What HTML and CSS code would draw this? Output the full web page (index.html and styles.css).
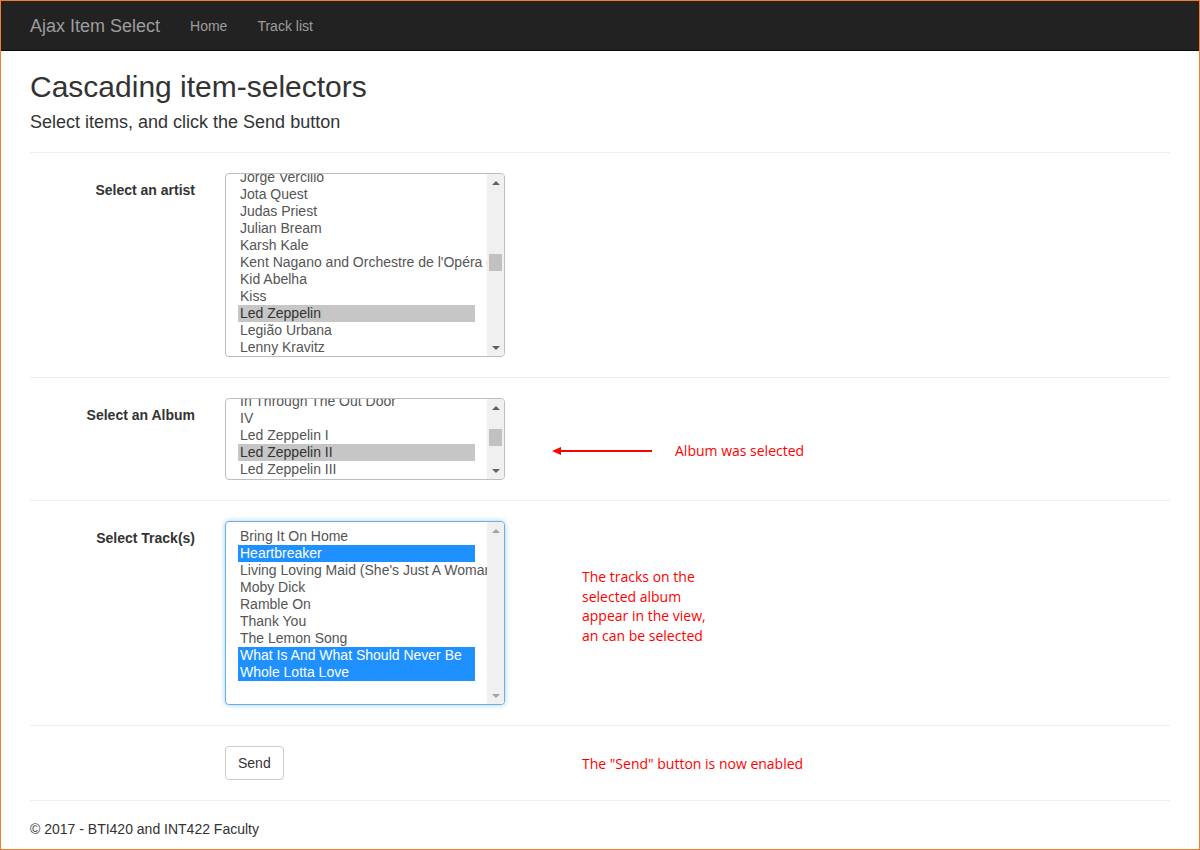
FILE: index.html
```html
<!DOCTYPE html>
<html lang="en">
<head>
<meta charset="utf-8">
<title>Ajax Item Select</title>
<link rel="stylesheet" href="styles.css">
</head>
<body>
<div class="frame">
  <nav class="navbar">
    <a class="brand">Ajax Item Select</a>
    <a class="nav-link">Home</a>
    <a class="nav-link">Track list</a>
  </nav>
  <main class="container">
    <h2 class="title">Cascading item-selectors</h2>
    <p class="subtitle">Select items, and click the Send button</p>

    <div class="group">
      <label class="label">Select an artist</label>
      <div class="control">
        <div class="listbox lb-tall">
          <div class="items">
            <div class="rows" style="margin-top:-5px">
              <div class="row">Jorge Vercilio</div>
              <div class="row">Jota Quest</div>
              <div class="row">Judas Priest</div>
              <div class="row">Julian Bream</div>
              <div class="row">Karsh Kale</div>
              <div class="row">Kent Nagano and Orchestre de l'Opéra de Lyon</div>
              <div class="row">Kid Abelha</div>
              <div class="row">Kiss</div>
              <div class="row sel-grey">Led Zeppelin</div>
              <div class="row">Legião Urbana</div>
              <div class="row">Lenny Kravitz</div>
              <div class="row">Lost</div>
            </div>
          </div>
          <div class="sb">
            <div class="sb-btn"><span class="arrow-up"></span></div>
            <div class="sb-track"><div class="thumb" style="margin-top:63px"></div></div>
            <div class="sb-btn"><span class="arrow-down"></span></div>
          </div>
        </div>
      </div>
    </div>

    <div class="group">
      <label class="label">Select an Album</label>
      <div class="control">
        <div class="listbox lb-short">
          <div class="items">
            <div class="rows" style="margin-top:-6px">
              <div class="row">In Through The Out Door</div>
              <div class="row">IV</div>
              <div class="row">Led Zeppelin I</div>
              <div class="row sel-grey">Led Zeppelin II</div>
              <div class="row">Led Zeppelin III</div>
              <div class="row">Physical Graffiti</div>
            </div>
          </div>
          <div class="sb">
            <div class="sb-btn"><span class="arrow-up"></span></div>
            <div class="sb-track"><div class="thumb" style="margin-top:13px"></div></div>
            <div class="sb-btn"><span class="arrow-down"></span></div>
          </div>
        </div>
      </div>
      <div class="note note-album">
        <svg class="arrow" width="100" height="10" viewBox="0 0 100 10">
          <polygon points="0,5 9,1 9,9" fill="#f00"/>
          <rect x="8" y="4" width="92" height="2" fill="#f00"/>
        </svg>
        <span class="note-text">Album was selected</span>
      </div>
    </div>

    <div class="group">
      <label class="label">Select Track(s)</label>
      <div class="control">
        <div class="listbox lb-tall focus">
          <div class="items">
            <div class="rows" style="margin-top:6px">
              <div class="row">Bring It On Home</div>
              <div class="row sel-blue">Heartbreaker</div>
              <div class="row">Living Loving Maid (She's Just A Woman)</div>
              <div class="row">Moby Dick</div>
              <div class="row">Ramble On</div>
              <div class="row">Thank You</div>
              <div class="row">The Lemon Song</div>
              <div class="row sel-blue">What Is And What Should Never Be</div>
              <div class="row sel-blue">Whole Lotta Love</div>
            </div>
          </div>
          <div class="sb">
            <div class="sb-btn"><span class="arrow-up disabled"></span></div>
            <div class="sb-track"></div>
            <div class="sb-btn"><span class="arrow-down disabled"></span></div>
          </div>
        </div>
      </div>
      <div class="note note-tracks">The tracks on the<br>selected album<br>appear in the view,<br>an can be selected</div>
    </div>

    <div class="group">
      <div class="label-spacer"></div>
      <div class="control">
        <button class="btn" type="button">Send</button>
      </div>
      <div class="note note-send">The "Send" button is now enabled</div>
    </div>

    <footer class="footer">
      <p>© 2017 - BTI420 and INT422 Faculty</p>
    </footer>
  </main>
</div>
</body>
</html>
```

FILE: styles.css
```css
html, body {
  margin: 0;
  padding: 0;
  background: #fff;
}

body {
  font-family: "Liberation Sans", Arial, sans-serif;
  font-size: 14px;
  line-height: 20px;
  color: #333;
}

.frame {
  box-sizing: border-box;
  width: 1200px;
  height: 850px;
  border: 1px solid #f0802e;
  overflow: hidden;
}

/* navbar */
.navbar {
  display: flex;
  align-items: center;
  height: 49px;
  background: #222;
  border-bottom: 1px solid #080808;
  padding: 0 29px;
}

.brand {
  font-size: 18px;
  line-height: 48px;
  color: #9d9d9d;
  padding-right: 15px;
}

.nav-link {
  font-size: 14px;
  line-height: 48px;
  color: #9d9d9d;
  padding: 0 15px;
}

/* content */
.container {
  padding: 0 29px;
}

.title {
  margin: 19px 0 0;
  font-size: 30px;
  line-height: 33px;
  font-weight: normal;
  color: #333;
}

.subtitle {
  margin: 9px 0 20px;
  font-size: 18px;
  line-height: 20px;
  color: #333;
}

.group {
  display: flex;
  align-items: flex-start;
  border-top: 1px solid #eee;
  padding: 20px 0;
}

.label,
.label-spacer {
  width: 165px;
  margin-right: 30px;
  flex: none;
}

.label {
  text-align: right;
  font-weight: bold;
  padding-top: 7px;
  color: #333;
}

.control {
  width: 280px;
  flex: none;
}

/* list boxes */
.listbox {
  box-sizing: border-box;
  width: 280px;
  display: flex;
  border: 1px solid #bdbdbd;
  border-radius: 4px;
  overflow: hidden;
  background: #fff;
}

.lb-tall { height: 184px; }
.lb-short { height: 82px; }

.listbox.focus {
  border-color: #66afe9;
  box-shadow: 0 0 5px rgba(102, 175, 233, 0.6);
}

.items {
  flex: 1;
  padding: 0 12px;
  overflow: hidden;
  color: #555;
}

.row {
  height: 17px;
  line-height: 17px;
  padding: 0 2px;
  white-space: nowrap;
}

.row.sel-grey {
  background: #c6c6c6;
  color: #333;
}

.row.sel-blue {
  background: #1e90ff;
  color: #fff;
}

.sb {
  width: 17px;
  flex: none;
  display: flex;
  flex-direction: column;
  background: #f0f0f0;
}

.sb-btn {
  height: 17px;
  flex: none;
  display: flex;
  align-items: center;
  justify-content: center;
}

.sb-track {
  flex: 1;
}

.thumb {
  height: 17px;
  margin-left: 2px;
  margin-right: 2px;
  background: #c1c1c1;
}

.arrow-up,
.arrow-down {
  width: 0;
  height: 0;
  border-left: 4px solid transparent;
  border-right: 4px solid transparent;
}

.arrow-up { border-bottom: 4px solid #606060; }
.arrow-down { border-top: 4px solid #606060; }
.arrow-up.disabled { border-bottom-color: #a3a3a3; }
.arrow-down.disabled { border-top-color: #a3a3a3; }

/* button */
.btn {
  box-sizing: border-box;
  height: 34px;
  padding: 6px 12px;
  font-family: "Liberation Sans", Arial, sans-serif;
  font-size: 14px;
  line-height: 20px;
  color: #333;
  background: #fff;
  border: 1px solid #ccc;
  border-radius: 4px;
}

/* annotations */
.note {
  font-family: "Open Sans", "Liberation Sans", sans-serif;
  font-size: 14px;
  color: #f00;
}

.note-album {
  display: flex;
  align-items: center;
  margin-left: 47px;
  margin-top: 43px;
  line-height: 20px;
}

.arrow {
  display: block;
  flex: none;
}

.note-text {
  margin-left: 23px;
}

.note-tracks {
  margin-left: 77px;
  margin-top: 46px;
  line-height: 19.6px;
}

.note-send {
  margin-left: 77px;
  margin-top: 8px;
  line-height: 20px;
}

/* footer */
.footer {
  border-top: 1px solid #eee;
  padding-top: 18px;
}

.footer p {
  margin: 0;
  color: #333;
}
```
